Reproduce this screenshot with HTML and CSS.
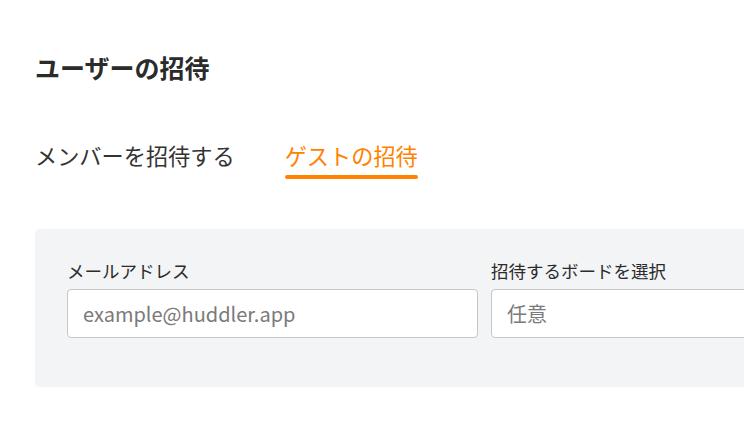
FILE: index.html
```html
<!DOCTYPE html>
<html lang="ja">
<head>
<meta charset="utf-8">
<link rel="stylesheet" href="styles.css">
</head>
<body>
<div class="page">
  <h1 class="title">ユーザーの招待</h1>
  <nav class="tabs">
    <span class="tab">メンバーを招待する</span>
    <span class="tab active">ゲストの招待</span>
  </nav>
  <div class="panel">
    <div class="field">
      <label class="label">メールアドレス</label>
      <input class="input" type="text" placeholder="example@huddler.app">
    </div>
    <div class="field">
      <label class="label">招待するボードを選択</label>
      <input class="input" type="text" placeholder="任意">
    </div>
  </div>
</div>
</body>
</html>
```
FILE: styles.css
```css
html, body {
  margin: 0;
  padding: 0;
  background: #fff;
  overflow: hidden;
}
body {
  font-family: "Noto Sans CJK JP", "Noto Sans", sans-serif;
  color: #2b2b2b;
}
.page {
  width: 1000px;
  padding: 49px 0 0 35px;
}
.title {
  margin: 0;
  font-size: 25px;
  font-weight: 700;
  line-height: 36px;
  color: #2b2b2b;
}
.tabs {
  display: flex;
  gap: 50px;
  margin-top: 54px;
}
.tab {
  font-size: 22.2px;
  line-height: 32px;
  padding-bottom: 8px;
  color: #333;
  position: relative;
}
.tab.active {
  color: #ff8200;
}
.tab.active::after {
  content: "";
  position: absolute;
  left: 0;
  right: 0;
  bottom: 0;
  height: 4px;
  border-radius: 2px;
  background: #ff8200;
}
.panel {
  margin-top: 50px;
  background: #f3f4f6;
  border-radius: 5px;
  padding: 30px 32px 49px 32px;
  display: grid;
  grid-template-columns: 411px 411px;
  gap: 13px;
}
.field {
  display: flex;
  flex-direction: column;
  gap: 6px;
}
.label {
  font-size: 17.5px;
  line-height: 24px;
  color: #2b2b2b;
}
.input {
  box-sizing: border-box;
  height: 49px;
  border: 1px solid #c6c6c6;
  border-radius: 4px;
  background: #fff;
  padding: 0 15px;
  font-family: "Noto Sans CJK JP", "Noto Sans", sans-serif;
  font-size: 20px;
  color: #333;
}
.input::placeholder {
  color: #7a7a7a;
}
```
